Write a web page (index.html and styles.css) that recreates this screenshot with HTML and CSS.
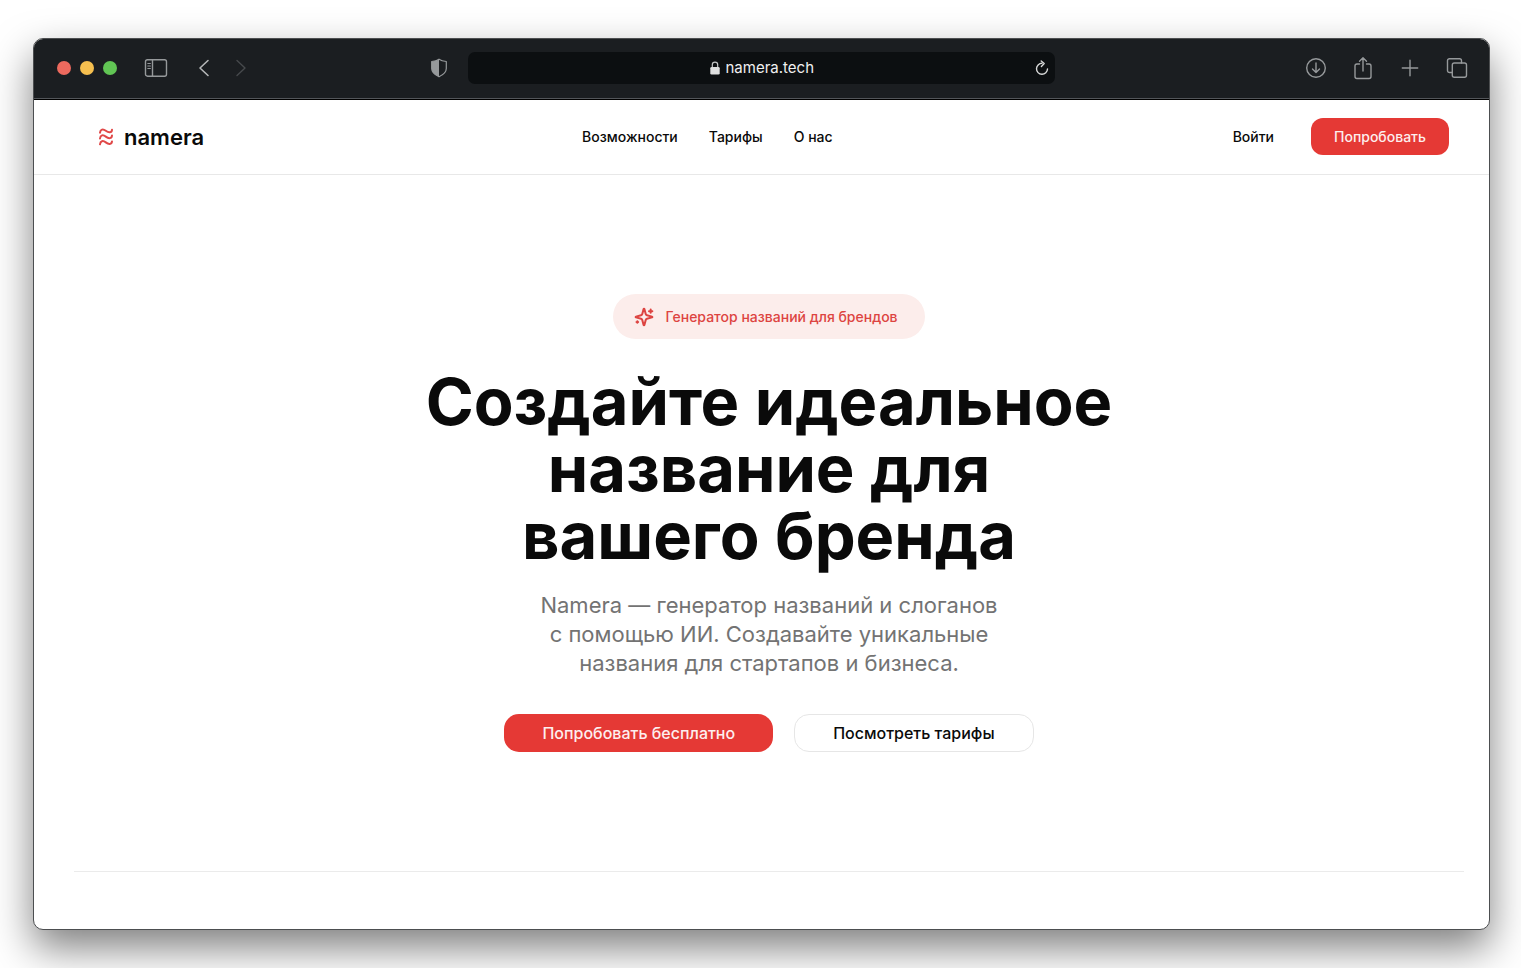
FILE: index.html
```html
<!DOCTYPE html>
<html lang="ru">
<head>
<meta charset="utf-8">
<meta name="viewport" content="width=device-width, initial-scale=1">
<title>namera</title>
<link rel="stylesheet" href="styles.css">
</head>
<body>
<div class="window">
  <div class="toolbar">
    <div class="toolbar-left">
      <div class="lights"><span class="light red"></span><span class="light yellow"></span><span class="light green"></span></div>
      <button class="tool sidebar" aria-label="Боковая панель">
        <svg width="24" height="20" viewBox="0 0 24 20"><rect x="1.5" y="1.8" width="21" height="16.4" rx="2" /><path d="M8.5 2v16"/><path d="M3.8 5.5h2.6M3.8 8h2.6M3.8 10.5h2.6" stroke-width="1.1"/></svg>
      </button>
      <button class="tool back" aria-label="Назад">
        <svg width="12" height="18" viewBox="0 0 12 18"><path d="M10 1.5 2 9l8 7.500" stroke-width="1.6"/></svg>
      </button>
      <button class="tool forward" aria-label="Вперёд">
        <svg width="12" height="18" viewBox="0 0 12 18"><path d="m2 1.500 8 7.500-8 7.500"/></svg>
      </button>
      <button class="tool shield" aria-label="Отчёт о конфиденциальности">
        <svg width="18" height="20" viewBox="0 0 18 20"><path d="M9 1.200c2.200 1.500 4.700 2 7.300 2.300v7c0 4-3.600 6.500-7.300 8.300-3.700-1.800-7.300-4.300-7.300-8.300v-7C4.300 3.200 6.800 2.700 9 1.200z" stroke-width="1.2"/><path class="solid" d="M9 1.200v17.600c-3.700-1.800-7.300-4.300-7.300-8.300v-7C4.300 3.200 6.800 2.700 9 1.200z"/></svg>
      </button>
    </div>
    <div class="address">
      <svg class="lock" width="10" height="14" viewBox="0 0 10 14"><rect x="0.300" y="6" width="9.400" height="7.500" rx="1.300" fill="#dedfdf"/><path d="M2.300 6V3.800a2.700 2.700 0 0 1 5.400 0V6" fill="none" stroke="#c4c6c7" stroke-width="1.200"/></svg>
      <input class="url" type="text" value="namera.tech" aria-label="Адрес">
      <button class="reload" aria-label="Обновить">
        <svg width="14" height="16" viewBox="0 0 14 16"><path d="M7 3.300a5.500 5.500 0 1 0 5.500 5.700" /><path d="m6.200 1 3 2.500-2.800 2.900"/></svg>
      </button>
    </div>
    <div class="toolbar-right">
      <button class="tool" aria-label="Загрузки">
        <svg width="22" height="22" viewBox="0 0 22 22"><circle cx="11" cy="11" r="9.300"/><path d="M11 6v9.500M7.500 12l3.500 3.500 3.500-3.500"/></svg>
      </button>
      <button class="tool" aria-label="Поделиться">
        <svg width="22" height="24" viewBox="0 0 22 24"><path d="M7.500 8H5a2 2 0 0 0-2 2v10.500a2 2 0 0 0 2 2h12a2 2 0 0 0 2-2V10a2 2 0 0 0-2-2h-2.500M11 15V2M7.500 5.200 11 1.700l3.500 3.500"/></svg>
      </button>
      <button class="tool" aria-label="Новая вкладка">
        <svg width="22" height="22" viewBox="0 0 22 22"><path d="M11 3.300v15.400M3.300 11h15.400"/></svg>
      </button>
      <button class="tool" aria-label="Обзор вкладок">
        <svg width="22" height="22" viewBox="0 0 22 22"><rect x="6.300" y="6" width="14.200" height="14.200" rx="2"/><path d="M6.300 15.500H3.500a2 2 0 0 1-2-2V3.700a2 2 0 0 1 2-2h10a2 2 0 0 1 2 2V6"/></svg>
      </button>
    </div>
  </div>

  <header class="header">
    <a class="logo" href="#">
      <svg width="16" height="18" viewBox="0 0 16 18"><path d="M2 4.700C2.400 1.200 5 .6 7.800 2.800S13.600 5 14 1.800M2 10.500c.4-3.500 3-4.100 5.800-1.900S13.600 10.800 14 7.600M2 16.300c.4-3.500 3-4.100 5.800-1.900s5.800 2.200 6.200-1"/></svg>
      <span>namera</span>
    </a>
    <nav class="nav">
      <a href="#">Возможности</a>
      <a href="#">Тарифы</a>
      <a href="#">О нас</a>
    </nav>
    <div class="account">
      <a class="login" href="#">Войти</a>
      <button class="button primary small">Попробовать</button>
    </div>
  </header>

  <main class="main">
    <section class="hero">
      <div class="pill">
        <svg width="20" height="20" viewBox="0 0 24 24"><path d="M9.937 15.500A2 2 0 0 0 8.500 14.063l-6.135-1.582a.5.5 0 0 1 0-.962L8.500 9.936A2 2 0 0 0 9.937 8.500l1.582-6.135a.5.5 0 0 1 .963 0L14.063 8.500A2 2 0 0 0 15.500 9.937l6.135 1.581a.5.5 0 0 1 0 .964L15.500 14.063a2 2 0 0 0-1.437 1.437l-1.582 6.135a.5.5 0 0 1-.963 0z"/><path d="M20 3v4M22 5h-4M4 17v2M5 18H3"/></svg>
        <span>Генератор названий для брендов</span>
      </div>
      <h1 class="title">Создайте идеальное<br>название для<br>вашего бренда</h1>
      <p class="lead">Namera — генератор названий и слоганов<br>с помощью ИИ. Создавайте уникальные<br>названия для стартапов и бизнеса.</p>
      <div class="actions">
        <button class="button primary">Попробовать бесплатно</button>
        <button class="button outline">Посмотреть тарифы</button>
      </div>
    </section>
  </main>
</div>
</body>
</html>
```
FILE: styles.css
```css
* { box-sizing: border-box; }

body {
  margin: 0;
  min-height: 100vh;
  padding: 38px 31px 38px 33px;
  display: flex;
  background: #fff;
  color: #0a0a0a;
  font-family: Inter, "Liberation Sans", sans-serif;
}

a { color: inherit; text-decoration: none; }

button, input { font: inherit; border: 0; padding: 0; background: none; }

svg { display: block; flex: none; }

.window {
  flex: 1;
  display: flex;
  flex-direction: column;
  border: 1px solid #4c4e50;
  border-radius: 10px;
  overflow: hidden;
  background: #fff;
  box-shadow: 0 18px 40px rgba(0, 0, 0, 0.5);
}

/* Browser toolbar */
.toolbar {
  display: grid;
  grid-template-columns: 1fr 587px 1fr;
  align-items: center;
  height: 61px;
  padding: 0 21px 3px 21px;
  background: #1b1e21;
  border-bottom: 1px solid #000;
  box-shadow: inset 0 -1px #53565a;
}

.toolbar-left, .toolbar-right { display: flex; align-items: center; }

.toolbar-right { justify-content: flex-end; gap: 25px; }

.lights { display: flex; gap: 9px; padding-left: 2px; }

.light { width: 14px; height: 14px; border-radius: 50%; }
.red { background: #ed6a5e; }
.yellow { background: #f5bf4f; }
.green { background: #61c554; }

.tool { color: #96999b; }

.tool svg, .reload svg {
  fill: none;
  stroke: currentColor;
  stroke-width: 1.4;
  stroke-linecap: round;
  stroke-linejoin: round;
}

.tool .solid { fill: currentColor; stroke: none; }

.sidebar { margin-left: 27px; }
.back { margin-left: 30px; color: #b5b7b8; }
.forward { margin-left: 25px; color: #46494c; }
.shield { margin-left: auto; margin-right: 20px; }

.address {
  position: relative;
  display: flex;
  align-items: center;
  justify-content: center;
  gap: 6px;
  height: 32px;
  border-radius: 7px;
  background: #0c0f11;
}

.url {
  width: 88px;
  color: #f0f0f0;
  font-size: 15px;
  line-height: 20px;
}

.reload { position: absolute; right: 6px; color: #d8d9d9; }

/* Site header */
.header {
  display: flex;
  align-items: center;
  justify-content: space-between;
  height: 75px;
  padding: 0 40px 1px 64px;
  border-bottom: 1px solid #e8e8e8;
  font-size: 14px;
  font-weight: 500;
}

.logo {
  display: flex;
  align-items: center;
  gap: 10px;
  font-size: 22px;
  font-weight: 600;
}

.logo svg {
  fill: none;
  stroke: #e04848;
  stroke-width: 2;
  stroke-linecap: round;
}

.nav { display: flex; gap: 31px; }

.account { display: flex; align-items: center; gap: 15px; }

.login { padding: 0 22px; }

.button {
  height: 38px;
  padding: 0 38px;
  border-radius: 15px;
  font-size: 16px;
  font-weight: 500;
}

.primary { background: #e53935; color: #fdeeee; }
.outline { border: 1px solid #e6e6e6; background: #fff; color: #0a0a0a; }

.small { height: 37px; padding: 0 23px; border-radius: 12px; font-size: 14px; }

/* Hero */
.main { flex: 1; padding: 0 25px 0 40px; }

.hero {
  display: flex;
  flex-direction: column;
  align-items: center;
  padding: 119px 0;
  border-bottom: 1px solid #ebebeb;
  text-align: center;
}

.pill {
  display: flex;
  align-items: center;
  gap: 11px;
  height: 45px;
  padding: 0 27px 0 21px;
  border-radius: 23px;
  background: #fcedeb;
  color: #dd4441;
  font-size: 14px;
  font-weight: 500;
}

.pill svg {
  fill: none;
  stroke: currentColor;
  stroke-width: 2.4;
  stroke-linecap: round;
  stroke-linejoin: round;
}

.title {
  margin: 29px 0 0;
  font-size: 65px;
  line-height: 67px;
  font-weight: 700;
}

.lead {
  margin: 22px 0 0;
  color: #737373;
  font-size: 22px;
  line-height: 29px;
}

.actions { display: flex; gap: 21px; margin-top: 36px; }
```
